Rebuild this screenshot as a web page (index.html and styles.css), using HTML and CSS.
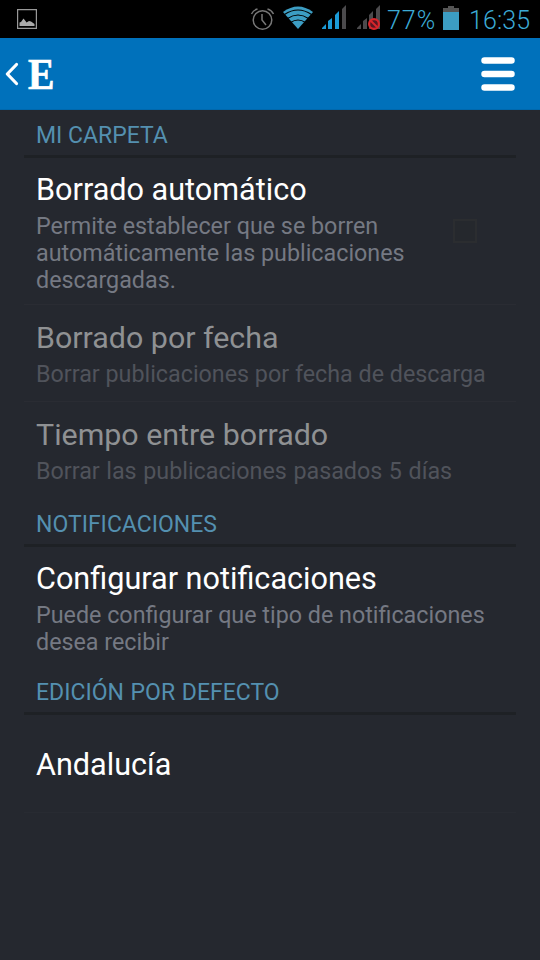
FILE: index.html
```html
<!DOCTYPE html>
<html lang="es">
<head>
<meta charset="utf-8">
<title>Ajustes</title>
<link rel="stylesheet" href="styles.css">
</head>
<body>
<div class="status">
  <svg class="picture" width="20" height="20" viewBox="0 0 20 20"><path d="M.6.6h18.8v18.8H.6z" fill="none" stroke="#999" stroke-width="1.2"/><path d="M2.500 17v-3.500L4 13l2.500-3.500L8.500 12l1 1.500L12 12l2 .5 3.500 2.500v2z" fill="#aaa"/></svg>
  <svg class="system" width="148" height="38" viewBox="242 0 148 38">
    <g fill="none" stroke="#777" stroke-width="1.500"><circle cx="262.500" cy="20" r="9.300"/><path d="M262 14v6l4 5M251.500 14q2-4 6-5M267.500 9q4 1 6 5"/></g>
    <path d="M283 12q15-11 30 0L298 29z" fill="#3c9dc3"/>
    <path d="M284.500 14.500q13.500-9 27 0M287.500 18.500q10.500-7 21 0M290.500 22.500q7.500-5 15 0" fill="none" stroke="#000" stroke-width="1.100"/>
    <path d="M322 29v-1l4-4v5zM328 29v-8l4-3v11zM335 29V15l4-4v18z" fill="#1b9bd7"/>
    <path d="M342 29V9l4-4v24zM357 29v-1l4-4v5zM363 29v-8l4-3v11zM369 29V15l4-4v18zM376 29V9l4-4v24z" fill="#4b4a4c"/>
    <circle cx="374" cy="24" r="4.900" fill="#571722" stroke="#d8252b" stroke-width="2.200"/><path d="M371 21l6 6" stroke="#d8252b" stroke-width="2"/>
  </svg>
  <span class="percent">77%</span>
  <svg class="battery" width="16" height="24" viewBox="0 0 16 24"><path d="M5 0h6v2h5v4H0V2h5z" fill="#555"/><path d="M0 6h16v18H0z" fill="#3c9dc3"/></svg>
  <span class="clock">16:35</span>
</div>
<header class="bar">
  <svg class="back" width="14" height="24" viewBox="0 0 14 24"><path d="M11.500 2.500L2.300 12l9.200 9.500" fill="none" stroke="#fff" stroke-width="3.200" stroke-linecap="round" stroke-linejoin="round"/></svg>
  <span class="logo">E</span>
  <svg class="menu" width="34" height="34" viewBox="0 0 34 34"><path d="M3.500 3.500h27M3.500 17h27M3.500 30.500h27" stroke="#fff" stroke-width="6.500" stroke-linecap="round"/></svg>
</header>
<main>
  <h2>MI CARPETA</h2>
  <section class="item auto ruled">
    <div>
      <h3>Borrado automático</h3>
      <p>Permite establecer que se borren<br>automáticamente las publicaciones<br>descargadas.</p>
    </div>
    <span class="check"></span>
  </section>
  <section class="item short ruled off">
    <div><h3>Borrado por fecha</h3><p>Borrar publicaciones por fecha de descarga</p></div>
  </section>
  <section class="item short interval off">
    <div><h3>Tiempo entre borrado</h3><p>Borrar las publicaciones pasados 5 días</p></div>
  </section>
  <h2>NOTIFICACIONES</h2>
  <section class="item notify">
    <div><h3>Configurar notificaciones</h3><p>Puede configurar que tipo de notificaciones<br>desea recibir</p></div>
  </section>
  <h2 class="edition">EDICIÓN POR DEFECTO</h2>
  <section class="item region ruled">
    <div><h3>Andalucía</h3></div>
  </section>
</main>
</body>
</html>
```
FILE: styles.css
```css
* { box-sizing: border-box; margin: 0; padding: 0; }
body { width: 540px; height: 960px; overflow: hidden; background: #25282f; font-family: Roboto, "Noto Sans", sans-serif; }
svg { display: block; flex: none; }
.status { height: 38px; background: #000; display: flex; align-items: flex-start; color: #3cabd6; font-size: 25px; font-weight: 300; line-height: 38px; }
.picture { margin: 9px 0 0 17px; }
.system { margin-left: 205px; }
.percent { width: 53px; margin-left: -3px; padding-top: 2px; letter-spacing: 1px; }
.battery { margin: 6px 0 0 3px; }
.clock { margin-left: 10px; padding-top: 2px; white-space: nowrap; letter-spacing: .1px; }
.bar { height: 72px; background: #0071bb; display: flex; align-items: center; border-bottom: 1px solid #0068ad; }
.back { margin-left: 5px; }
.logo { font: bold 45px/60px "Liberation Serif", serif; color: #fff; width: 28px; margin: 1px 0 0 9px; transform: scaleX(.88); transform-origin: left; -webkit-text-stroke: .7px #fff; }
.menu { margin: 0 25px 0 auto; }
main { padding: 0 24px; }
h2 { height: 48px; border-bottom: 3px solid #1e2125; padding: 12px 12px 0; font-size: 23px; line-height: 28px; font-weight: 400; color: #5490b0; }
.item { display: flex; padding: 13px 12px 0; }
.ruled { border-bottom: 1px solid #2a2c33; }
h3 { font-size: 30.6px; line-height: 38px; font-weight: 400; color: #fff; white-space: nowrap; }
p { margin-top: 4px; font-size: 23.3px; line-height: 27px; color: #757983; white-space: nowrap; }
.edition { word-spacing: 1px; }
.auto { height: 147px; }
.short { height: 97px; padding-top: 14px; }
.off h3 { font-size: 30.4px; color: #8f9193; }
.off p { color: #50535b; }
.interval p { word-spacing: .8px; }
.notify { height: 120px; }
.region { height: 98px; padding-top: 31px; border-bottom-color: #282b32; }
.check { width: 24px; height: 24px; border: 2px solid #2b2d30; background: #25282d; margin: 48px 27px 0 auto; }
```
